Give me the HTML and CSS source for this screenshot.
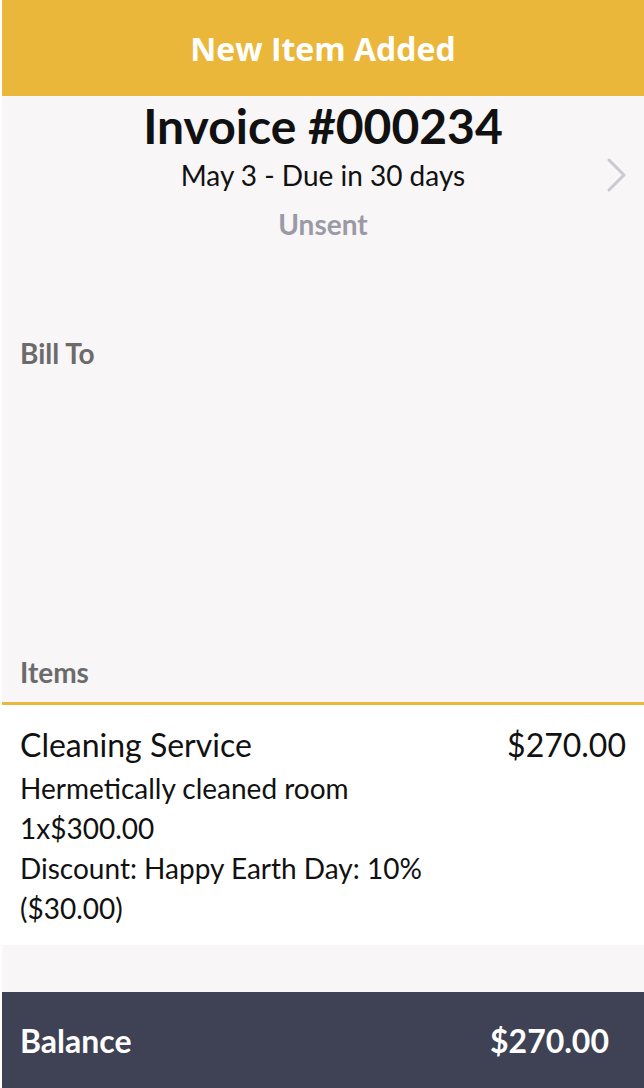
FILE: index.html
```html
<!DOCTYPE html>
<html lang="en">
<head>
    <meta charset="UTF-8">
    <meta name="viewport" content="width=device-width, initial-scale=1.0">
    <title>Invoice #000234</title>
    <link rel="stylesheet" href="styles.css">
</head>
<body>
    <header class="topbar">New Item Added</header>

    <section class="invoice-head">
        <h1 class="invoice-title">Invoice #000234</h1>
        <div class="date-row">
            <span></span>
            <span class="invoice-date">May 3 - Due in 30 days</span>
            <svg class="chevron" width="22" height="36" viewBox="0 0 22 36">
                <path d="M3 3 L18 18 L3 33" fill="none" stroke="#c9c9ce" stroke-width="3" stroke-linecap="round" stroke-linejoin="round"/>
            </svg>
        </div>
        <div class="status">Unsent</div>
    </section>

    <section class="bill-to">
        <div class="section-label">Bill To</div>
    </section>

    <div class="items-label">
        <div class="section-label">Items</div>
    </div>

    <section class="item">
        <div class="item-top">
            <span class="item-name">Cleaning Service</span>
            <span class="item-total">$270.00</span>
        </div>
        <div class="item-line">Hermetically cleaned room</div>
        <div class="item-line">1x$300.00</div>
        <div class="item-line">Discount: Happy Earth Day: 10%</div>
        <div class="item-line">($30.00)</div>
    </section>

    <div class="spacer"></div>

    <footer class="balance">
        <span>Balance</span>
        <span>$270.00</span>
    </footer>
</body>
</html>
```

FILE: styles.css
```css
html {
    background: #fff;
}
body {
    margin: 0 0 0 2px;
    font-family: Lato, "Open Sans", sans-serif;
    background-color: #f8f6f7;
    color: #111;
}
.topbar {
    height: 96px;
    display: flex;
    align-items: center;
    justify-content: center;
    background-color: #ebb73a;
    color: #fff;
    font-family: "Open Sans", sans-serif;
    font-weight: 700;
    font-size: 32px;
}
.invoice-head {
    padding-top: 2px;
    text-align: center;
}
.invoice-title {
    margin: 0;
    font-size: 48px;
    line-height: 56px;
    font-weight: 700;
}
.date-row {
    margin-top: 3px;
    display: grid;
    grid-template-columns: 1fr auto 1fr;
    align-items: center;
}
.invoice-date {
    font-size: 28px;
    line-height: 34px;
}
.chevron {
    justify-self: end;
    margin-right: 16px;
}
.status {
    margin-top: 14px;
    font-size: 28px;
    line-height: 34px;
    font-weight: 700;
    color: #9a9aa6;
}
.bill-to {
    padding: 95px 18px 0;
    height: 319px;
}
.section-label {
    font-size: 28px;
    line-height: 34px;
    font-weight: 700;
    color: #6b6b6b;
}
.items-label {
    padding: 0 18px 13px;
    border-bottom: 3px solid #ebb73a;
}
.item {
    background: #fff;
    padding: 20px 18px 17px 18px;
}
.item-top {
    display: flex;
    justify-content: space-between;
    font-size: 32px;
    line-height: 40px;
    margin-bottom: 3px;
}
.item-line {
    font-size: 28px;
    line-height: 40px;
}
.spacer {
    height: 47px;
}
.balance {
    height: 96px;
    display: flex;
    align-items: center;
    justify-content: space-between;
    padding: 0 35px 0 18px;
    background-color: #3f4154;
    color: #fff;
    font-size: 32px;
    font-weight: 700;
}
```
